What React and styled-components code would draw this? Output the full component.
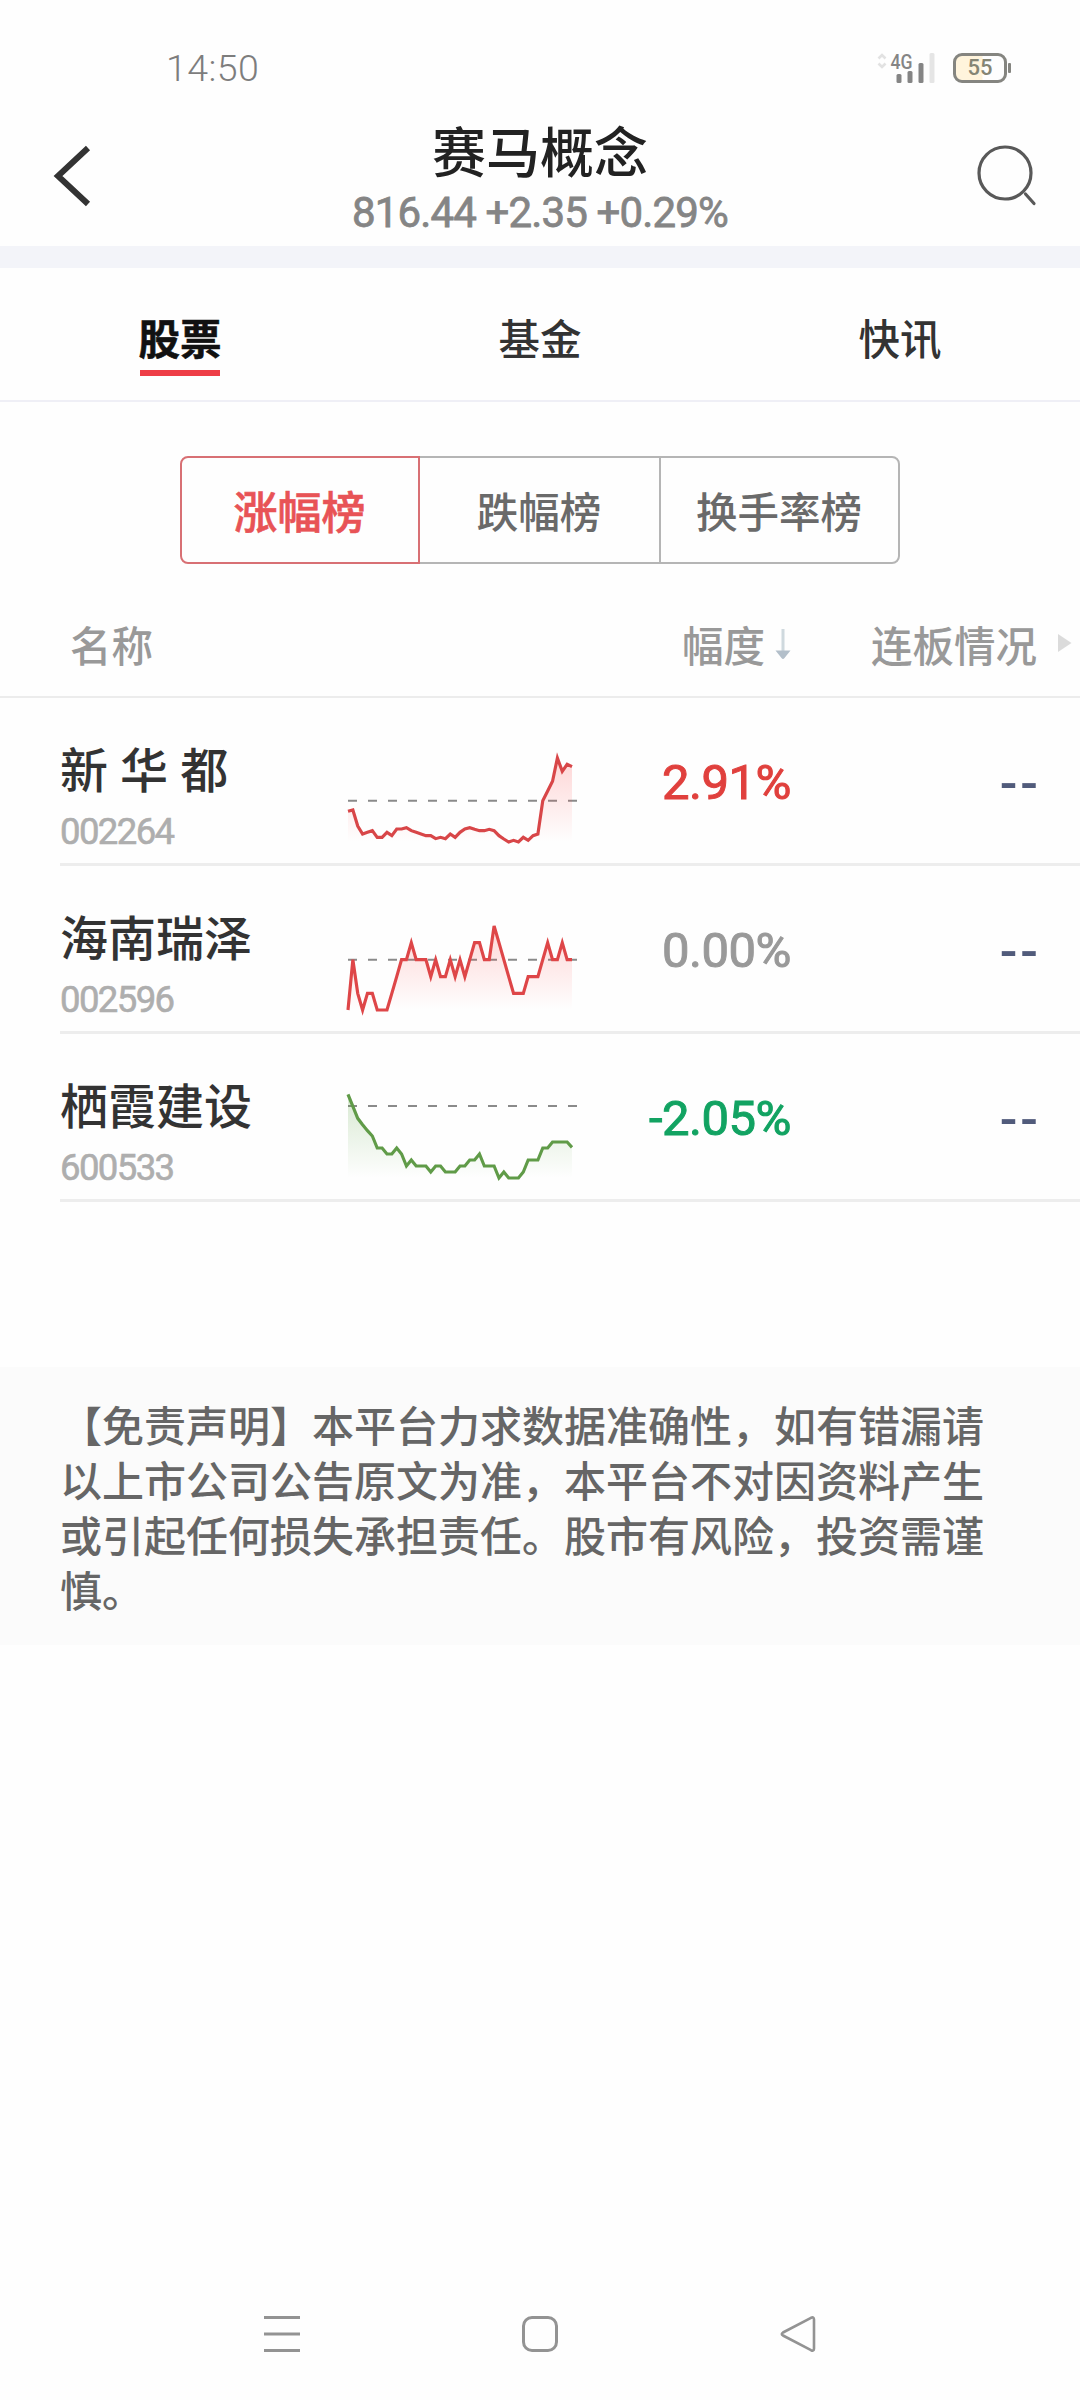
import { useState } from "react";

import styled, { createGlobalStyle } from "styled-components";

const GlobalStyle = createGlobalStyle`
  * {
    box-sizing: border-box;
  }
  body {
    margin: 0;
    background-color: #fefefe;
    font-family: "Noto Sans CJK SC", sans-serif;
  }
`;

const Page = styled.div`
  display: flex;
  flex-direction: column;
  width: 1080px;
  height: 2400px;
  overflow: hidden;
  background-color: #fefefe;
`;

const StatusBar = styled.div`
  display: flex;
  justify-content: space-between;
  align-items: center;
  height: 100px;
  padding: 36px 69px 0 166px;
`;

const Clock = styled.span`
  font-family: Roboto, sans-serif;
  font-weight: 300;
  font-size: 37.5px;
  line-height: 64px;
  letter-spacing: 0.4px;
  color: #7d7d7d;
`;

const StatusIcons = styled.div`
  display: flex;
  gap: 18px;
`;

const StatusIcon = styled.svg`
  overflow: visible;
`;

const Header = styled.header`
  display: grid;
  grid-template-columns: 160px 1fr 160px;
  height: 146px;
`;

const HeaderButton = styled.button`
  display: flex;
  justify-content: ${({ $end }) => ($end ? "flex-end" : "flex-start")};
  padding: ${({ $end }) => ($end ? "44px 43px 0 0" : "44px 0 0 52px")};
  border: none;
  background: none;
`;

const HeaderTitle = styled.div`
  text-align: center;
`;

const Title = styled.h1`
  margin: 17px 0 0;
  font-weight: 500;
  font-size: 54px;
  line-height: 66px;
  color: #222;
`;

const Quote = styled.p`
  margin: 5px 0 0;
  font-family: Roboto, sans-serif;
  font-weight: 400;
  font-size: 42px;
  line-height: 50px;
  letter-spacing: -0.85px;
  color: #858585;
  -webkit-text-stroke: 0.8px #858585;
`;

const Divider = styled.div`
  height: 22px;
  background-color: #f3f4f9;
`;

const Tabs = styled.nav`
  display: grid;
  grid-template-columns: repeat(3, 1fr);
  height: 134px;
  border-bottom: 2px solid #efeff6;
`;

const Tab = styled.button`
  display: flex;
  flex-direction: column;
  align-items: center;
  gap: 2px;
  padding: 38px 0 0;
  border: none;
  background: none;
  font-family: inherit;
  font-weight: ${({ $active }) => ($active ? 700 : 500)};
  font-size: 41.5px;
  line-height: 62px;
  color: ${({ $active }) => ($active ? "#111" : "#333")};
  ${({ $active }) => $active && "-webkit-text-stroke: 0.6px #111;"}
  &::after {
    content: "";
    width: 80px;
    height: 6px;
    background-color: ${({ $active }) => ($active ? "#ee3d46" : "transparent")};
  }
`;

const Segments = styled.div`
  display: grid;
  grid-template-columns: 240px 239px 241px;
  height: 108px;
  margin: 54px 180px 0;
`;

const Segment = styled.button`
  padding: 0 1px 1px 0;
  border: 2px solid ${({ $active }) => ($active ? "#d87074" : "#b5b5b5")};
  background: none;
  font-family: inherit;
  font-weight: 500;
  font-size: ${({ $active }) => ($active ? "44px" : "41.5px")};
  color: ${({ $active }) => ($active ? "#e85356" : "#6a6a6a")};
  ${({ $active }) => $active && "-webkit-text-stroke: 0.6px #e85356;"}
  &:first-child {
    border-radius: 8px 0 0 8px;
  }
  &:nth-child(2) {
    border-left: none;
    border-right: none;
  }
  &:last-child {
    border-radius: 0 8px 8px 0;
  }
`;

const ListHead = styled.div`
  display: grid;
  grid-template-columns: 682px 189px 1fr;
  align-items: center;
  height: 134px;
  padding-top: 27px;
  border-bottom: 2px solid #ececec;
  font-weight: 500;
  font-size: 41.5px;
  line-height: 60px;
  color: #999;
`;

const HeadCell = styled.div`
  display: flex;
  align-items: center;
  gap: ${({ $gap }) => $gap || 0}px;
  padding-left: ${({ $inset }) => $inset || 0}px;
`;

const Row = styled.div`
  display: grid;
  grid-template-columns: 288px 240px 203px 1fr;
  height: 168px;
  margin-left: 60px;
  border-bottom: 3px solid #ededed;
`;

const Stock = styled.div`
  display: flex;
  flex-direction: column;
  padding-top: 37px;
`;

const StockName = styled.span`
  font-weight: 500;
  font-size: 48px;
  line-height: 64px;
  word-spacing: 1.3px;
  white-space: nowrap;
  color: #333;
`;

const StockCode = styled.span`
  margin-top: 12px;
  font-family: Roboto, sans-serif;
  font-size: 36.5px;
  line-height: 42px;
  letter-spacing: -1.6px;
  color: #aeaeae;
  -webkit-text-stroke: 0.6px #aeaeae;
`;

const Change = styled.span`
  padding-top: 56px;
  text-align: right;
  font-family: Roboto, sans-serif;
  font-weight: 400;
  font-size: 49px;
  line-height: 58px;
  letter-spacing: -0.5px;
  color: ${({ $trend }) =>
    $trend === "up" ? "#e0403d" : $trend === "down" ? "#12a362" : "#999"};
  -webkit-text-stroke: 1px currentColor;
`;

const Streak = styled.span`
  padding: 57px 39px 0 0;
  text-align: right;
  font-family: Roboto, sans-serif;
  font-weight: 500;
  font-size: 52px;
  line-height: 58px;
  letter-spacing: 3px;
  color: #515b7b;
`;

const Chart = styled.svg`
  display: block;
  width: 230px;
  height: 84px;
  margin-top: 60px;
  overflow: visible;
`;

const Disclaimer = styled.p`
  height: 278px;
  margin: 165px 0 0;
  padding: 29px 90px 0 60px;
  background-color: #fbfbfb;
  font-size: 42px;
  font-weight: 500;
  line-height: 55px;
  color: #666;
`;

const SystemNav = styled.footer`
  display: flex;
  justify-content: space-between;
  align-items: center;
  height: 132px;
  margin-top: auto;
  padding: 0 262px;
`;

// values are in thirds of a pixel, measured down from the top of the chart
const stocks = [
  {
    name: "新 华 都",
    code: "002264",
    change: "2.91%",
    trend: "up",
    color: "#d84648",
    fill: "#ff4646",
    base: 128,
    points: [
      160, 156, 204, 228, 223, 218, 238, 238, 223, 233, 213, 213, 209, 218,
      223, 228, 233, 233, 242, 238, 242, 228, 238, 223, 213, 209, 214, 218,
      218, 214, 218, 233, 243, 252, 247, 252, 238, 247, 233, 228, 128, 99, 70,
      0, 40, 19, 26,
    ],
  },
  {
    name: "海南瑞泽",
    code: "002596",
    change: "0.00%",
    trend: "flat",
    color: "#de4648",
    fill: "#ff4646",
    base: 101,
    points: [
      252, 101, 202, 252, 202, 202, 252, 252, 252, 202, 152, 101, 101, 50, 101,
      101, 101, 152, 101, 152, 152, 101, 152, 101, 152, 101, 50, 50, 101, 101,
      0, 50, 101, 152, 202, 202, 202, 152, 152, 152, 101, 50, 101, 101, 50, 101,
      101,
    ],
  },
  {
    name: "栖霞建设",
    code: "600533",
    change: "-2.05%",
    trend: "down",
    color: "#609b48",
    fill: "#4f9c33",
    base: 36,
    points: [
      1, 37, 73, 92, 110, 126, 162, 162, 180, 180, 162, 180, 216, 198, 216, 216,
      216, 234, 216, 216, 234, 234, 234, 216, 216, 198, 198, 180, 216, 216, 216,
      252, 234, 252, 252, 252, 234, 198, 198, 198, 162, 162, 144, 144, 144, 144,
      160,
    ],
  },
];

const tabs = ["股票", "基金", "快讯"];
const rankings = ["涨幅榜", "跌幅榜", "换手率榜"];

function Sparkline({ id, points, base, color, fill }) {
  const step = 672 / (points.length - 1);
  const line = points.map((y, i) => `${(i * step).toFixed(1)},${y}`).join(" ");

  return (
    <Chart viewBox="0 0 690 252">
      <defs>
        <linearGradient
          id={id}
          gradientUnits="userSpaceOnUse"
          x1="0"
          y1="0"
          x2="0"
          y2="252"
        >
          <stop offset="0" stopColor={fill} stopOpacity="0.22" />
          <stop offset="1" stopColor={fill} stopOpacity="0" />
        </linearGradient>
      </defs>
      <line
        x1="0"
        x2="687"
        y1={base}
        y2={base}
        stroke="#8a8a8a"
        strokeWidth="6"
        strokeDasharray="27 33"
      />
      <polygon points={`0,252 ${line} 672,252`} fill={`url(#${id})`} />
      <polyline points={line} fill="none" stroke={color} strokeWidth="9.5" />
    </Chart>
  );
}

function SignalIcon() {
  return (
    <StatusIcon width="58" height="32" viewBox="0 0 58 32">
      <g fill="none" stroke="#e2e2e2" strokeWidth="2.6">
        <path d="M1.5 6.5 5 3l3.500 3.500M1.500 11.500 5 15l3.500-3.500" />
      </g>
      <text
        x="13.500"
        y="16.500"
        fontFamily="Roboto, sans-serif"
        fontWeight="500"
        fontSize="20"
        textLength="22"
        lengthAdjust="spacingAndGlyphs"
        fill="#858585"
      >
        4G
      </text>
      <g fill="#858585">
        <rect x="19.500" y="22" width="5" height="9" rx="1.500" />
        <rect x="30.500" y="19" width="5" height="12" rx="1.500" />
        <rect x="41.500" y="11" width="5" height="20" rx="1.500" />
      </g>
      <rect x="52.500" y="1" width="5" height="30" rx="1.500" fill="#e5e5e5" />
    </StatusIcon>
  );
}

function BatteryIcon() {
  return (
    <StatusIcon width="58" height="32" viewBox="0 0 58 32">
      <path
        d="M9 2.500h20.500v27H9a6.500 6.500 0 0 1-6.500-6.500V9A6.500 6.500 0 0 1 9 2.500z"
        fill="#fff4dc"
      />
      <rect
        x="1.500"
        y="2.500"
        width="51"
        height="27"
        rx="7.500"
        fill="none"
        stroke="#858580"
        strokeWidth="3"
      />
      <rect x="55" y="11" width="3" height="10" rx="1" fill="#858580" />
      <text
        x="27"
        y="23.200"
        textAnchor="middle"
        fontFamily="Roboto, sans-serif"
        fontWeight="500"
        fontSize="22"
        fill="#858574"
      >
        55
      </text>
    </StatusIcon>
  );
}

export default function App() {
  const [tab, setTab] = useState(0);
  const [ranking, setRanking] = useState(0);

  return (
    <>
      <GlobalStyle />
      <Page>
        <StatusBar>
          <Clock>14:50</Clock>
          <StatusIcons>
            <SignalIcon />
            <BatteryIcon />
          </StatusIcons>
        </StatusBar>

        <Header>
          <HeaderButton aria-label="返回">
            <svg width="40" height="64" viewBox="0 0 40 64">
              <path
                d="M36 4 6 32l30 28"
                fill="none"
                stroke="#333"
                strokeWidth="6"
              />
            </svg>
          </HeaderButton>
          <HeaderTitle>
            <Title>赛马概念</Title>
            <Quote>816.44 +2.35 +0.29%</Quote>
          </HeaderTitle>
          <HeaderButton $end aria-label="搜索">
            <svg width="62" height="62" viewBox="0 0 62 62">
              <g fill="none" stroke="#595959" strokeWidth="3.2">
                <circle cx="30" cy="29" r="26" />
                <path d="m50.500 50 8.500 9.500" strokeLinecap="round" />
              </g>
            </svg>
          </HeaderButton>
        </Header>
        <Divider />

        <Tabs>
          {tabs.map((label, i) => (
            <Tab key={label} $active={i === tab} onClick={() => setTab(i)}>
              {label}
            </Tab>
          ))}
        </Tabs>

        <Segments>
          {rankings.map((label, i) => (
            <Segment
              key={label}
              $active={i === ranking}
              onClick={() => setRanking(i)}
            >
              {label}
            </Segment>
          ))}
        </Segments>

        <ListHead>
          <HeadCell $inset={70}>名称</HeadCell>
          <HeadCell $gap={10}>
            幅度
            <svg width="16" height="32" viewBox="0 0 16 32">
              <path d="M6.500 1h3v22h-3z" fill="#cfd9de" />
              <path d="M.500 22.500h15L9.500 30q-1.500 2-3 0z" fill="#b3bfca" />
            </svg>
          </HeadCell>
          <HeadCell $gap={20}>
            连板情况
            <svg width="16" height="22" viewBox="0 0 16 22">
              <path d="M1 1v18l13.500-9z" fill="#dbdbdb" />
            </svg>
          </HeadCell>
        </ListHead>

        {stocks.map((stock) => (
          <Row key={stock.code}>
            <Stock>
              <StockName>{stock.name}</StockName>
              <StockCode>{stock.code}</StockCode>
            </Stock>
            <Sparkline
              id={`fill-${stock.code}`}
              points={stock.points}
              base={stock.base}
              color={stock.color}
              fill={stock.fill}
            />
            <Change $trend={stock.trend}>{stock.change}</Change>
            <Streak>--</Streak>
          </Row>
        ))}

        <Disclaimer>
          【免责声明】本平台力求数据准确性，如有错漏请以上市公司公告原文为准，本平台不对因资料产生或引起任何损失承担责任。股市有风险，投资需谨慎。
        </Disclaimer>

        <SystemNav>
          <svg width="40" height="40" viewBox="0 0 40 40">
            <path
              d="M2 3.500h36M2 20h36M2 36.500h36"
              stroke="#939393"
              strokeWidth="3"
            />
          </svg>
          <svg width="40" height="40" viewBox="0 0 40 40">
            <rect
              x="3.500"
              y="3.500"
              width="33"
              height="33"
              rx="8.500"
              fill="none"
              stroke="#939393"
              strokeWidth="3"
            />
          </svg>
          <svg width="40" height="40" viewBox="0 0 40 40">
            <path
              d="M33 3.800 5 18.500q-2.400 1.500 0 3L33 36.200q3 1.300 3-1.700v-29q0-3-3-1.700z"
              fill="none"
              stroke="#939393"
              strokeWidth="2.600"
            />
          </svg>
        </SystemNav>
      </Page>
    </>
  );
}
